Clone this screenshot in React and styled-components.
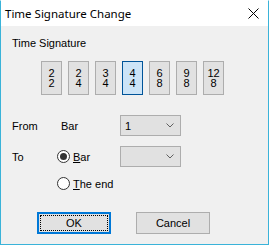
import React from "react";
import styled, { createGlobalStyle, css } from "styled-components";

const Global = createGlobalStyle`
  html, body { margin: 0; padding: 0; background: #f0f0f0; }
  #root { width: 269px; height: 245px; }
`;

const Dialog = styled.div`
  width: 269px;
  height: 245px;
  box-sizing: border-box;
  border: 1px solid #3ab3d9;
  border-top-color: #ffffff;
  background: #f0f0f0;
  display: flex;
  flex-direction: column;
  font-family: "Liberation Sans", Arial, sans-serif;
  font-size: 11px;
  color: #000;
`;

const TitleBar = styled.div`
  height: 25px;
  flex: none;
  background: #ffffff;
  display: flex;
  align-items: center;
  justify-content: space-between;
  padding: 0 9px 0 4px;
`;

const Title = styled.span`
  font-family: "Noto Sans", "Liberation Sans", sans-serif;
  font-size: 11.5px;
  line-height: 14px;
  color: #000;
`;

const Body = styled.div`
  padding: 11px 0 0 11px;
  display: flex;
  flex-direction: column;
`;

const SectionLabel = styled.div`
  height: 13px;
  line-height: 13px;
`;

const SigRow = styled.div`
  display: flex;
  gap: 6px;
  margin: 11px 0 0 29px;
`;

const SigButton = styled.div`
  width: 21px;
  height: 34px;
  box-sizing: border-box;
  border: 1px solid #adadad;
  background: #e1e1e1;
  display: flex;
  flex-direction: column;
  align-items: center;
  justify-content: center;
  line-height: 10px;
  ${(p) =>
    p.$active &&
    css`
      border-color: #005499;
      background: #cce4f7;
    `}
`;

const Form = styled.div`
  display: grid;
  grid-template-columns: 45px 63px 61px;
  grid-template-rows: 21px 21px 13px;
  row-gap: 10px;
  margin-top: 20px;
  align-items: center;
`;

const FieldLabel = styled.span`
  padding-left: ${(p) => p.$indent || 0}px;
`;

const Combo = styled.div`
  width: 61px;
  height: 21px;
  box-sizing: border-box;
  border: 1px solid #adadad;
  background: #e1e1e1;
  display: flex;
  align-items: center;
  justify-content: space-between;
  padding: 0 6px 0 4px;
`;

const Option = styled.label`
  display: flex;
  align-items: center;
  gap: 3px;
`;

const Radio = styled.span`
  width: 13px;
  height: 13px;
  box-sizing: border-box;
  border-radius: 50%;
  border: 1px solid #333333;
  background: #ffffff;
  display: flex;
  align-items: center;
  justify-content: center;
  &::after {
    content: "";
    width: 7px;
    height: 7px;
    border-radius: 50%;
    background: ${(p) => (p.$checked ? "#333333" : "transparent")};
  }
`;

const Key = styled.span`
  text-decoration: underline;
`;

const Actions = styled.div`
  display: flex;
  gap: 25px;
  margin: 22px 0 0 25px;
`;

const Button = styled.div`
  position: relative;
  width: 74px;
  height: 22px;
  box-sizing: border-box;
  background: #e1e1e1;
  border: 1px solid #adadad;
  display: flex;
  align-items: center;
  justify-content: center;
  ${(p) =>
    p.$default &&
    css`
      border: 2px solid #0078d7;
      &::after {
        content: "";
        position: absolute;
        inset: 1px;
        border: 1px dotted #000;
      }
    `}
`;

const Chevron = () => (
  <svg width="8" height="5" viewBox="0 0 8 5">
    <path d="M0.5 0.5 L4 4 L7.5 0.5" fill="none" stroke="#606060" strokeWidth="1" />
  </svg>
);

const CloseIcon = () => (
  <svg width="11" height="11" viewBox="0 0 11 11">
    <path d="M0.5 0.5 L10.5 10.5 M10.5 0.5 L0.5 10.5" stroke="#000" strokeWidth="1" />
  </svg>
);

const signatures = [
  ["2", "2"],
  ["2", "4"],
  ["3", "4"],
  ["4", "4"],
  ["6", "8"],
  ["9", "8"],
  ["12", "8"],
];

export default function App() {
  return (
    <>
      <Global />
      <Dialog>
        <TitleBar>
          <Title>Time Signature Change</Title>
          <CloseIcon />
        </TitleBar>
        <Body>
          <SectionLabel>Time Signature</SectionLabel>
          <SigRow>
            {signatures.map(([n, d]) => (
              <SigButton key={n + d} $active={n === "4" && d === "4"}>
                <span>{n}</span>
                <span>{d}</span>
              </SigButton>
            ))}
          </SigRow>
          <Form>
            <FieldLabel>From</FieldLabel>
            <FieldLabel $indent={4}>Bar</FieldLabel>
            <Combo>
              <span>1</span>
              <Chevron />
            </Combo>
            <FieldLabel>To</FieldLabel>
            <Option>
              <Radio $checked />
              <span>
                <Key>B</Key>ar
              </span>
            </Option>
            <Combo>
              <span />
              <Chevron />
            </Combo>
            <span />
            <Option>
              <Radio />
              <span>
                <Key>T</Key>he end
              </span>
            </Option>
          </Form>
          <Actions>
            <Button $default>OK</Button>
            <Button>Cancel</Button>
          </Actions>
        </Body>
      </Dialog>
    </>
  );
}
